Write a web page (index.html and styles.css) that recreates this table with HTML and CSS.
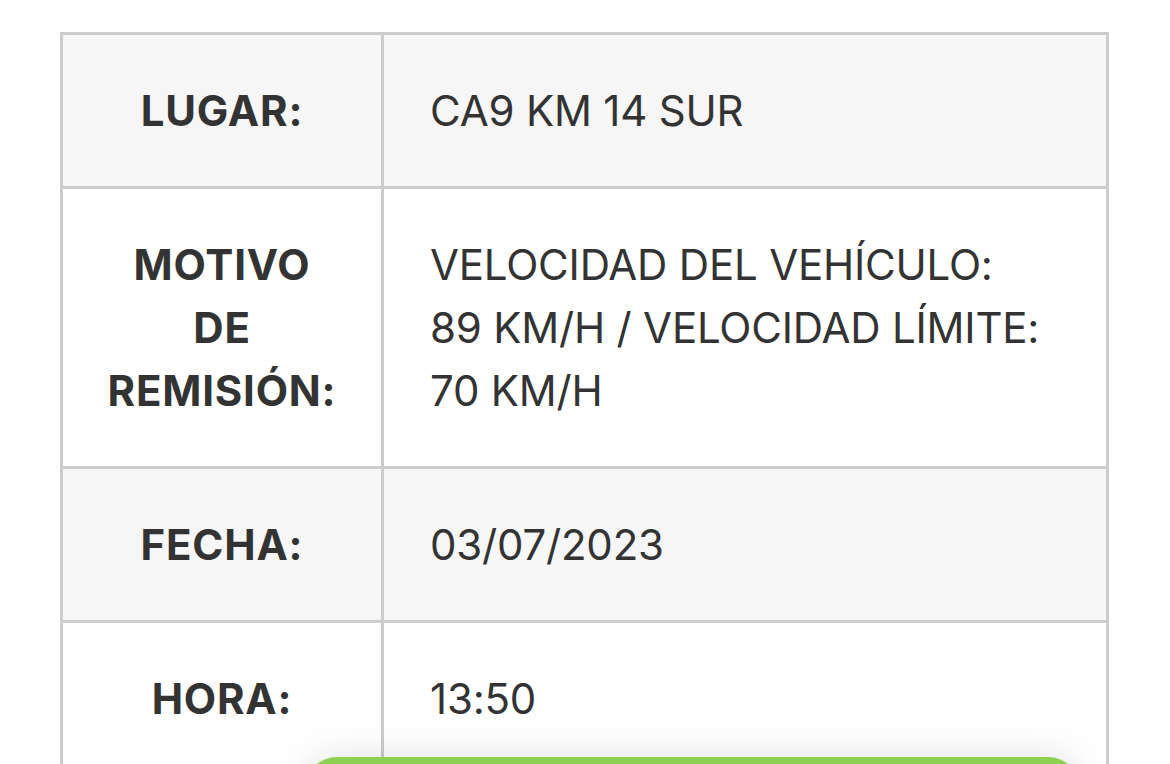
FILE: index.html
```html
<!DOCTYPE html>
<html lang="es">
<head>
<meta charset="utf-8">
<title>Detalle de infracción</title>
<link rel="stylesheet" href="styles.css">
</head>
<body>
<div class="details">
  <div class="label shade">LUGAR:</div>
  <div class="value shade">CA9 KM 14 SUR</div>
  <div class="label">MOTIVO<br>DE<br>REMISIÓN:</div>
  <div class="value">VELOCIDAD DEL VEHÍCULO:<br>89 KM/H / VELOCIDAD LÍMITE:<br>70 KM/H</div>
  <div class="label shade">FECHA:</div>
  <div class="value shade">03/07/2023</div>
  <div class="label">HORA:</div>
  <div class="value">13:50</div>
</div>
<div class="action"></div>
</body>
</html>
```
FILE: styles.css
```css
html, body {
  margin: 0;
  padding: 0;
  background: #ffffff;
  overflow: hidden;
}
body {
  font-family: Inter, "Noto Sans", "Liberation Sans", sans-serif;
  color: #333333;
  height: 764px;
  position: relative;
}
.details {
  box-sizing: border-box;
  width: 1049px;
  margin: 32px 0 0 60px;
  display: grid;
  grid-template-columns: 321px 1fr;
  border-top: 3px solid #cccccc;
  border-left: 3px solid #cccccc;
}
.label, .value {
  font-size: 42px;
  line-height: 63px;
  padding: 44px 0;
  border-bottom: 3px solid #cccccc;
  border-right: 3px solid #cccccc;
  background: #ffffff;
}
.label {
  font-weight: 700;
  text-align: center;
  letter-spacing: 0.8px;
}
.value {
  font-weight: 400;
  letter-spacing: -0.2px;
  padding-left: 46px;
  padding-right: 20px;
}
.shade {
  background: #f6f6f6;
}
.action {
  position: absolute;
  left: 305px;
  top: 757px;
  width: 775px;
  height: 64px;
  border-radius: 32px;
  background: #8ed04f;
  box-shadow: 0 0 40px rgba(0, 0, 0, 0.12);
}
```
